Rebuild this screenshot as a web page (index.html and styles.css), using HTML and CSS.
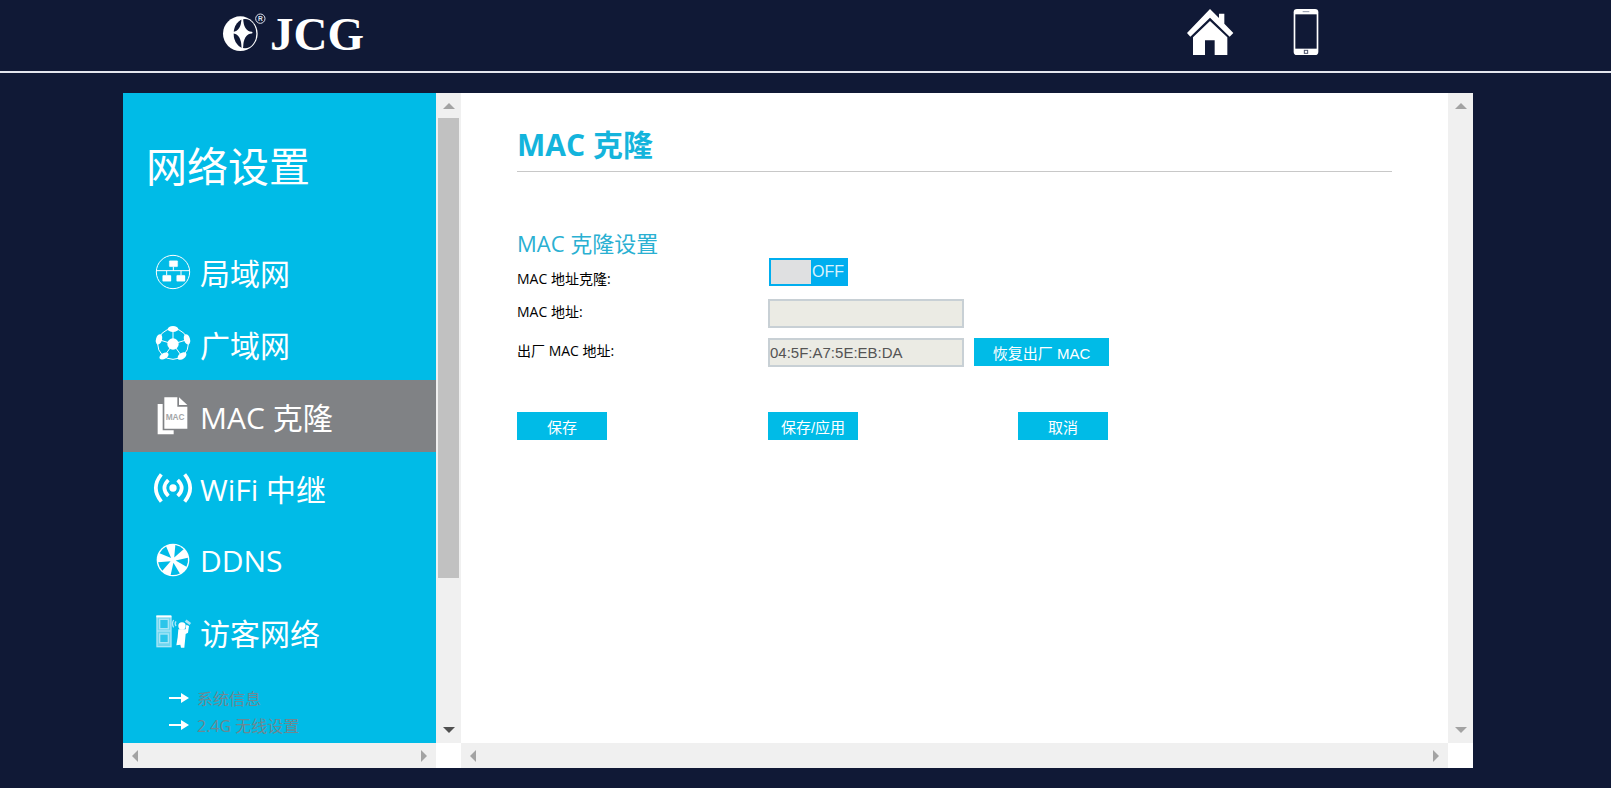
FILE: index.html
```
<!DOCTYPE html>
<html lang="zh-CN">
<head>
  <meta charset="UTF-8">
  <meta name="viewport" content="width=device-width, initial-scale=1.0">
  <title>MAC 克隆</title>
  <link rel="stylesheet" href="styles.css">
</head>
<body>
  <header>
    <a class="logo" href="#">
      <svg width="44" height="44" viewBox="0 0 132 132" aria-hidden="true">
        <circle cx="55" cy="71" r="52" fill="#fff"/>
        <ellipse cx="69" cy="71" rx="34" ry="44" fill="#101936"/>
        <path d="M61 25 Q62 66 89 68 Q62 70 61 112 Q60 70 33 68 Q60 66 61 25Z" fill="#fff" stroke="#fff" stroke-width="5" stroke-linejoin="round"/>
        <circle cx="115" cy="26" r="14" fill="none" stroke="#dfe3ee" stroke-width="3"/>
        <text class="reg" x="108" y="34">R</text>
      </svg>
      <span>JCG</span>
    </a>
    <nav class="top-nav">
      <a href="#" aria-label="首页">
        <svg width="48" height="48" viewBox="49 24 144 144" fill="#fff">
          <path d="M121 27 L148 54 V41 H164 V71 L191 99 L180 110 L121 53 L62 110 L52 99Z"/>
          <path d="M121 63 L173 112 V165 H135 V121 H106 V165 H70 V112Z"/>
        </svg>
      </a>
      <a href="#" aria-label="手机">
        <svg width="26" height="48" viewBox="0 0 78 144">
          <rect x="2" y="3" width="74" height="138" rx="10" fill="#fff"/>
          <rect x="7" y="19" width="64" height="103" fill="#101936"/>
          <path d="M29 11 H49" stroke="#8d93a6" stroke-width="3"/>
          <rect x="34" y="127" width="10" height="9" fill="none" stroke="#4a5068" stroke-width="3"/>
        </svg>
      </a>
    </nav>
  </header>

  <main>
    <div class="frame">
      <aside class="menu">
        <h2>网络设置</h2>
        <ul class="items">
          <li>
            <a href="#">
              <svg viewBox="0 0 120 120" fill="#fff" stroke="#fff">
                <circle cx="60" cy="60" r="50" fill="none" stroke-width="3"/>
                <path d="M10 56 H110 M61 44 V56 M41 56 V70 M84 56 V70" stroke-width="3"/>
                <rect x="49" y="26" width="25" height="18" rx="2"/>
                <rect x="29" y="70" width="25" height="18" rx="2"/>
                <rect x="71" y="70" width="25" height="18" rx="2"/>
              </svg>
              局域网
            </a>
          </li>
          <li>
            <a href="#">
              <svg viewBox="0 0 120 120" fill="#fff">
                <g fill="none" stroke="#fff" stroke-width="3">
                  <circle cx="60" cy="60" r="46"/>
                  <path d="M60 60 V14 M60 60 L17 47 M60 60 L103 47 M60 60 L34 96 M60 60 L86 96"/>
                </g>
                <circle cx="60" cy="60" r="17"/>
                <ellipse cx="60" cy="15" rx="16" ry="9"/>
                <ellipse cx="18" cy="46" rx="9" ry="16" transform="rotate(16 18 46)"/>
                <ellipse cx="102" cy="46" rx="9" ry="16" transform="rotate(-16 102 46)"/>
                <ellipse cx="33" cy="96" rx="15" ry="9" transform="rotate(-30 33 96)"/>
                <ellipse cx="87" cy="96" rx="15" ry="9" transform="rotate(-36 87 96)"/>
              </svg>
              广域网
            </a>
          </li>
          <li class="active">
            <a href="#">
              <svg viewBox="0 0 120 120" fill="#fff">
                <path d="M14 24 H29 V103 H62 V115 H14Z"/>
                <path d="M34 4 H73 V32 H103 V98 H34Z"/>
                <path d="M78 4 L103 27 H78Z"/>
                <text class="doc" x="38" y="73">MAC</text>
              </svg>
              MAC 克隆
            </a>
          </li>
          <li>
            <a href="#">
              <svg viewBox="0 0 120 120" fill="none" stroke="#fff" stroke-width="11">
                <circle cx="60" cy="60" r="11" fill="#fff" stroke="none"/>
                <path d="M46 36 Q22 60 46 84 M74 36 Q98 60 74 84"/>
                <path d="M25 19 Q-8 60 25 101 M95 19 Q128 60 95 101"/>
              </svg>
              WiFi 中继
            </a>
          </li>
          <li>
            <a href="#">
              <svg viewBox="0 0 120 120">
                <circle cx="60" cy="60" r="49" fill="#fff"/>
                <g fill="#00bbe7">
                  <path d="M68 60 L103 46 A45 45 0 0 1 103 74Z" transform="rotate(9 60 60)"/>
                  <path d="M68 60 L103 46 A45 45 0 0 1 103 74Z" transform="rotate(81 60 60)"/>
                  <path d="M68 60 L103 46 A45 45 0 0 1 103 74Z" transform="rotate(153 60 60)"/>
                  <path d="M68 60 L103 46 A45 45 0 0 1 103 74Z" transform="rotate(225 60 60)"/>
                  <path d="M68 60 L103 46 A45 45 0 0 1 103 74Z" transform="rotate(297 60 60)"/>
                </g>
              </svg>
              DDNS
            </a>
          </li>
          <li>
            <a href="#">
              <svg viewBox="0 0 120 120" fill="none" stroke="#a8e6f7" stroke-width="4">
                <rect x="12" y="14" width="42" height="90" fill="#6fd6f0"/>
                <path d="M10 13 H55" stroke="#fff" stroke-width="6"/>
                <rect x="20" y="22" width="26" height="28" fill="#2cc5ea"/>
                <rect x="20" y="66" width="26" height="26" fill="#2cc5ea"/>
                <path d="M12 57 H53"/>
                <path d="M62 24 Q55 35 62 46 M69 28 Q64 35 69 42"/>
                <path d="M98 26 L112 36" stroke-width="8"/>
                <g fill="#fff" stroke="none">
                  <circle cx="87" cy="42" r="11"/>
                  <path d="M76 52 H98 L100 38 L108 42 L105 62 L98 66 L94 107 H84 L82 98 L70 100 L74 76Z"/>
                </g>
              </svg>
              访客网络
            </a>
          </li>
        </ul>
        <ul class="links">
          <li>
            <a href="#">
              <svg viewBox="0 0 20 10"><path d="M0 4 H12 V0 L20 5 L12 10 V6 H0Z" fill="#fff"/></svg>
              系统信息
            </a>
          </li>
          <li>
            <a href="#">
              <svg viewBox="0 0 20 10"><path d="M0 4 H12 V0 L20 5 L12 10 V6 H0Z" fill="#fff"/></svg>
              2.4G 无线设置
            </a>
          </li>
        </ul>
      </aside>
      <div class="bar vertical">
        <i class="up"></i>
        <div class="thumb"></div>
        <i class="down enabled"></i>
      </div>
      <div class="bar horizontal">
        <i class="left"></i>
        <i class="right"></i>
      </div>
    </div>

    <div class="frame">
      <section class="content">
        <h1>MAC 克隆</h1>
        <form>
          <h3>MAC 克隆设置</h3>
          <div class="row first">
            <label for="clone">MAC 地址克隆:</label>
            <span class="switch">
              <input type="checkbox" id="clone">
              <label for="clone">OFF</label>
            </span>
          </div>
          <div class="row">
            <label for="mac">MAC 地址:</label>
            <input type="text" id="mac" name="mac" disabled>
          </div>
          <div class="row">
            <label for="factory-mac">出厂 MAC 地址:</label>
            <div class="field">
              <input type="text" id="factory-mac" name="factory-mac" value="04:5F:A7:5E:EB:DA" disabled>
              <button type="button" class="restore">恢复出厂 MAC</button>
            </div>
          </div>
          <div class="actions">
            <button type="button">保存</button>
            <button type="button">保存/应用</button>
            <button type="reset">取消</button>
          </div>
        </form>
      </section>
      <div class="bar vertical">
        <i class="up"></i>
        <i class="down"></i>
      </div>
      <div class="bar horizontal">
        <i class="left"></i>
        <i class="right"></i>
      </div>
    </div>
  </main>
</body>
</html>
```
FILE: styles.css
```
* {
  box-sizing: border-box;
}

body {
  margin: 0;
  background-color: #101936;
  font-family: "Open Sans", "Noto Sans CJK SC", sans-serif;
  color: #000;
}

h1, h2, h3, ul {
  margin: 0;
  padding: 0;
  font-weight: normal;
}

ul {
  list-style: none;
}

a {
  text-decoration: none;
}

/* top bar */
header {
  display: flex;
  justify-content: space-between;
  padding: 8px 292px 15px 222px;
  border-bottom: 2px solid #e4e6ee;
}

.logo {
  display: flex;
  align-items: center;
  gap: 4px;
  height: 48px;
  color: #fff;
  font: bold 47px/48px "Liberation Serif", serif;
}

.logo span {
  padding-top: 4px;
}

.logo .reg {
  font: bold 20px "Liberation Sans", sans-serif;
  fill: #dfe3ee;
}

.top-nav {
  display: flex;
  gap: 59px;
}

.top-nav svg {
  display: block;
}

/* two frames side by side */
main {
  display: grid;
  grid-template-columns: 338px 1fr;
  height: calc(100vh - 113px);
  margin: 20px 138px 20px 123px;
}

.frame {
  display: grid;
  grid-template-columns: 1fr 25px;
  grid-template-rows: 1fr 25px;
  min-height: 0;
  background-color: #fff;
}

.bar {
  display: flex;
  justify-content: space-between;
  align-items: center;
  background-color: #f0f0f0;
}

.vertical {
  flex-direction: column;
  padding: 10px 2px;
}

.horizontal {
  padding: 0 9px;
}

.thumb {
  width: 100%;
  height: 73%;
  margin: 9px 0 auto;
  background-color: #c1c1c1;
}

.bar i {
  border: 6px solid transparent;
}

.bar .up {
  border-top: 0;
  border-bottom-color: #a3a3a3;
}

.bar .down {
  border-bottom: 0;
  border-top-color: #a3a3a3;
}

.bar .down.enabled {
  border-top-color: #505050;
}

.bar .left {
  border-left: 0;
  border-right-color: #a3a3a3;
}

.bar .right {
  border-right: 0;
  border-left-color: #a3a3a3;
}

/* left menu */
.menu {
  overflow: hidden;
  padding-top: 43px;
  background-color: #00bbe7;
  color: #fff;
}

.menu h2 {
  margin-bottom: 40px;
  padding-left: 23px;
  font-size: 41px;
  line-height: 60px;
}

.items a {
  display: flex;
  align-items: center;
  gap: 7px;
  height: 72px;
  padding-left: 30px;
  color: #fff;
  font-size: 30px;
}

.items svg {
  width: 40px;
  height: 40px;
}

.items .doc {
  font: bold 25px "Liberation Sans", sans-serif;
  fill: #a5a6a8;
}

.items .active {
  background-color: #808285;
}

.links {
  padding: 16px 0 0 46px;
}

.links a {
  display: flex;
  align-items: center;
  gap: 8px;
  height: 27px;
  color: #6d8892;
  font-size: 16px;
}

.links svg {
  width: 20px;
  height: 10px;
}

/* settings page */
.content {
  overflow: hidden;
  padding: 32px 56px;
}

h1 {
  padding-bottom: 6px;
  border-bottom: 1px solid #c8c8c8;
  color: #14b4dc;
  font-size: 30px;
  font-weight: bold;
  line-height: 40px;
}

h3 {
  margin-top: 56px;
  color: #2ab0d2;
  font-size: 22px;
  line-height: 30px;
}

.row {
  display: grid;
  grid-template-columns: 251px 1fr;
  align-items: start;
  min-height: 29px;
  margin-bottom: 10px;
  font-size: 14px;
  line-height: 26px;
}

.row.first {
  align-items: center;
  min-height: 41px;
  margin-bottom: 0;
}

input[type="text"] {
  width: 196px;
  height: 29px;
  padding: 0;
  border: 2px solid #c8d0d5;
  background-color: #ebebe4;
  color: #545454;
  font: 15px "Liberation Sans", sans-serif;
}

.field {
  display: flex;
  align-items: start;
  gap: 10px;
}

.switch {
  display: flex;
  align-items: center;
  align-self: start;
  gap: 1px;
  width: 79px;
  height: 28px;
  margin-left: 1px;
  padding: 2px;
  background-color: #00aeef;
}

.switch input {
  appearance: none;
  width: 40px;
  height: 24px;
  margin: 0;
  background-color: #dfe0e1;
}

.switch label {
  color: #d9f2fd;
  font: 16px "Liberation Sans", sans-serif;
}

button {
  width: 90px;
  height: 28px;
  padding: 0;
  border: none;
  background-color: #00bbe7;
  color: #fff;
  font: 15px "Liberation Sans", "Noto Sans CJK SC", sans-serif;
  cursor: pointer;
}

button.restore {
  width: 135px;
}

.actions {
  display: grid;
  grid-template-columns: 251px 250px 1fr;
  margin-top: 45px;
}
```
